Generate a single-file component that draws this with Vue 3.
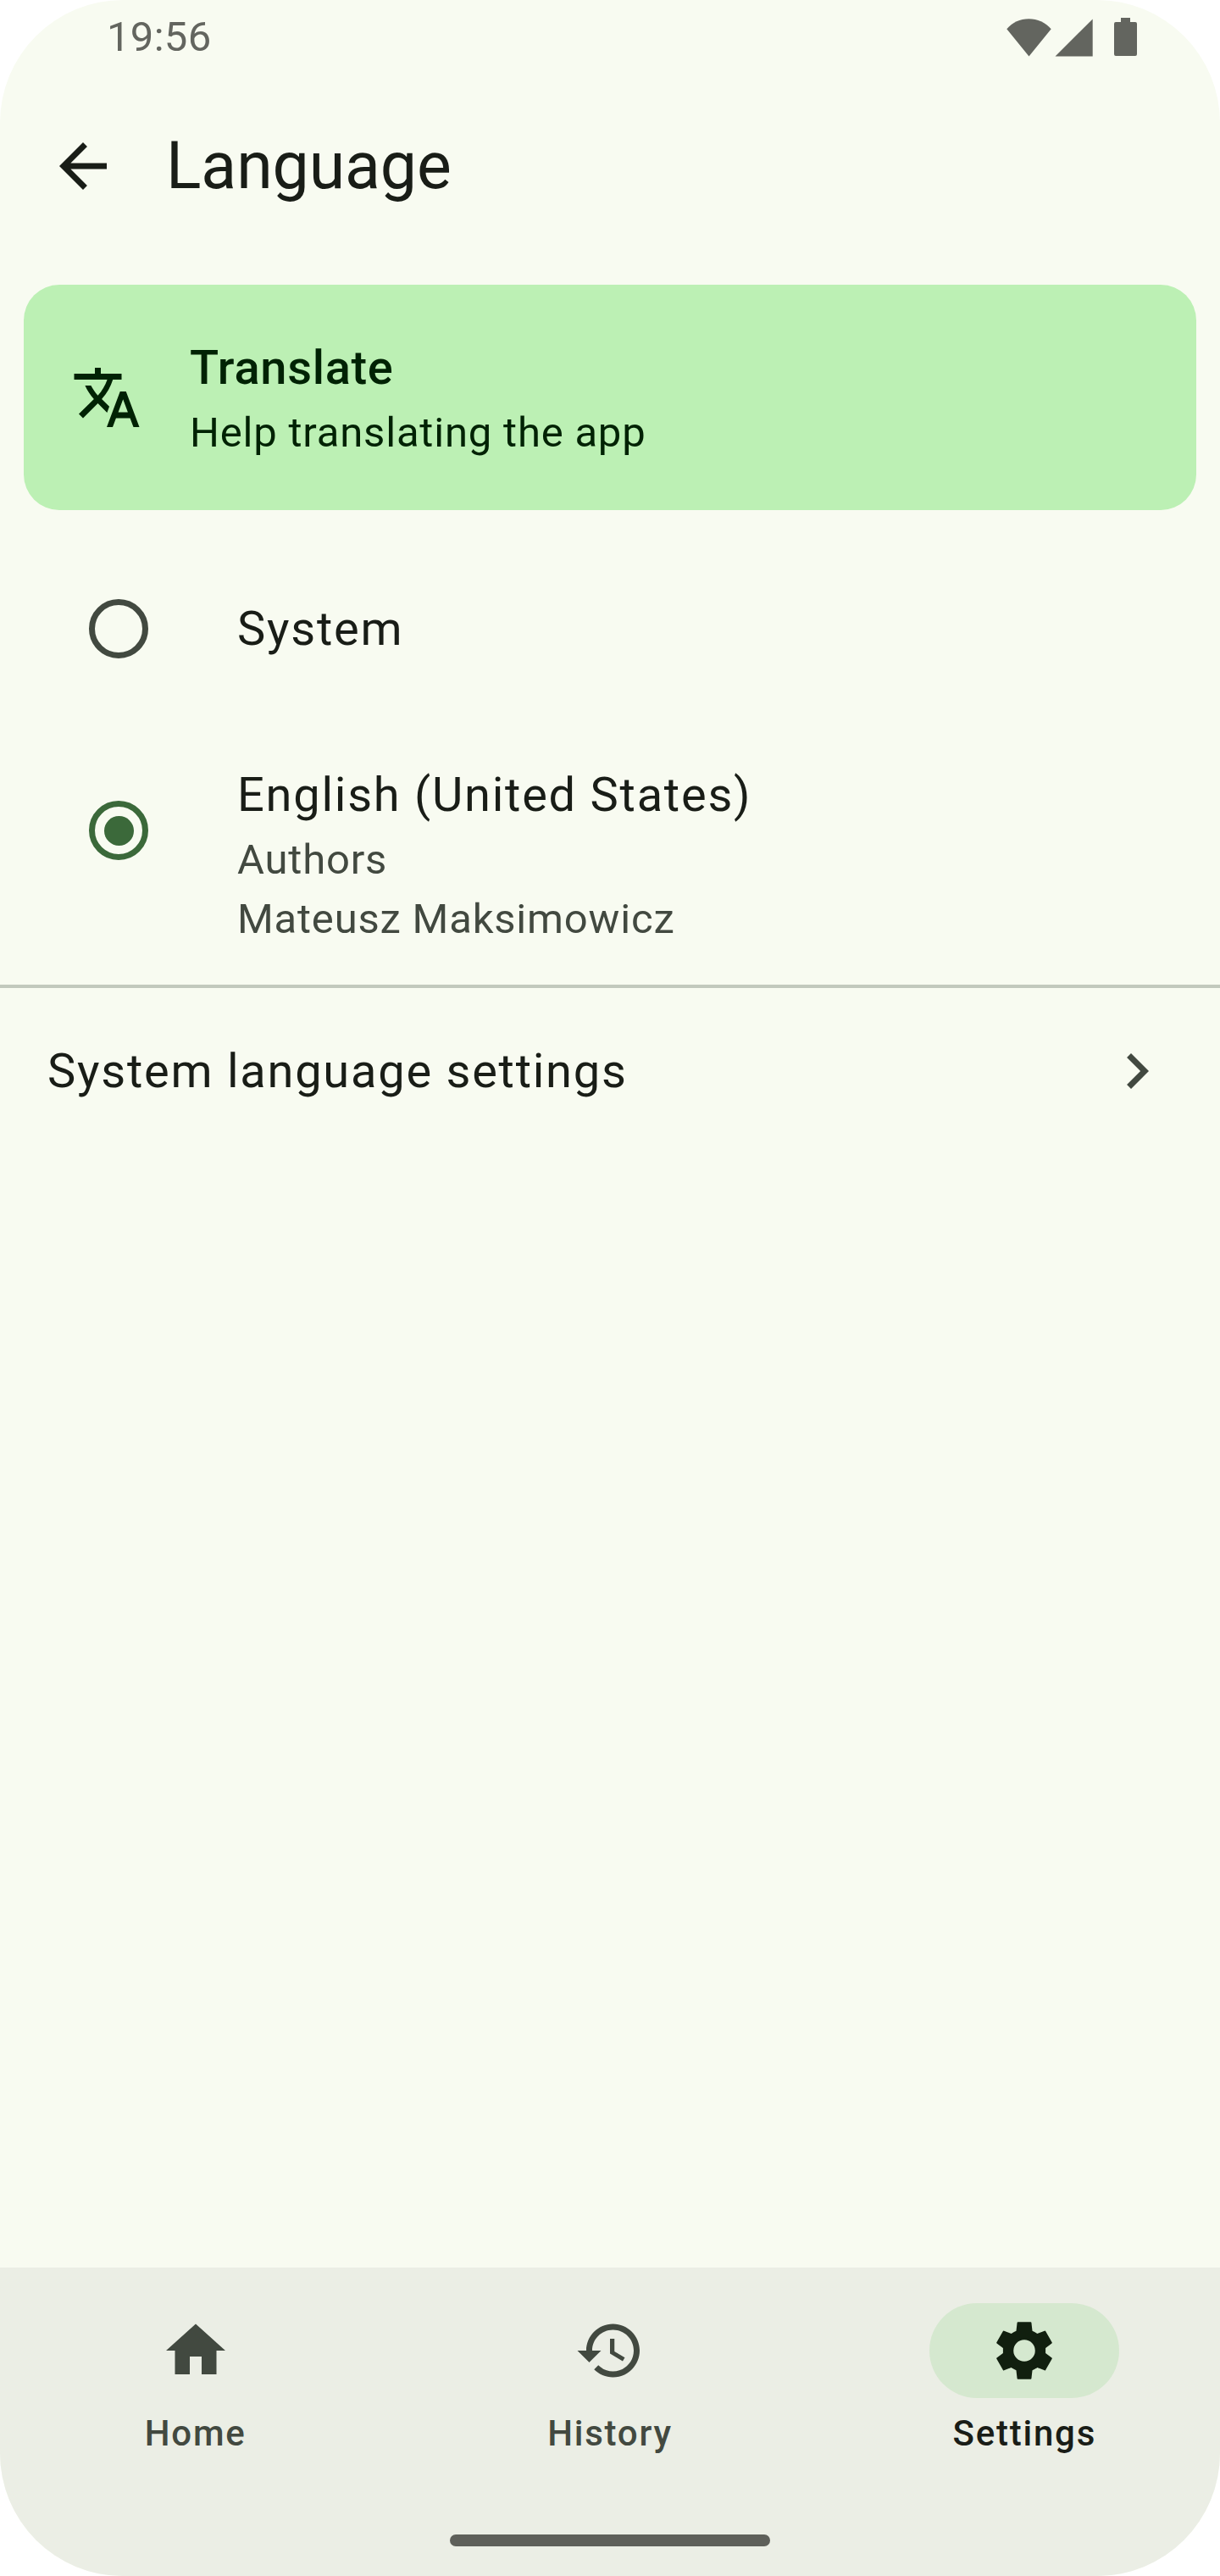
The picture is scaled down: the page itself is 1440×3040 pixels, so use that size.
<script setup>
import { ref } from 'vue'

const languages = [
  { id: 'system', name: 'System', authors: [] },
  { id: 'en-US', name: 'English (United States)', authors: ['Mateusz Maksimowicz'] },
]
const selected = ref('en-US')

const tabs = [
  { id: 'home', label: 'Home', icon: 'M10 20v-6h4v6h5v-8h3L12 3 2 12h3v8z' },
  {
    id: 'history',
    label: 'History',
    icon: 'M13 3c-4.97 0-9 4.03-9 9H1l3.89 3.89.07.14L9 12H6c0-3.87 3.13-7 7-7s7 3.13 7 7-3.13 7-7 7c-1.93 0-3.68-.79-4.94-2.06l-1.42 1.42C8.27 19.99 10.51 21 13 21c4.97 0 9-4.03 9-9s-4.03-9-9-9zm-1 5v5l4.28 2.54.72-1.21-3.5-2.08V8H12z',
  },
  {
    id: 'settings',
    label: 'Settings',
    icon: 'M9.85 2.35h4.3q.22 0 .25.22l.32 2.82q.9.35 1.65.93l2.45-.99q.22-.08.35.13l2.16 3.73q.12.2-.06.35l-2.1 1.58v1.76l2.1 1.58q.18.15.06.35l-2.16 3.73q-.13.21-.35.13l-2.45-.99q-.75.58-1.65.93l-.32 2.82q-.03.22-.25.22h-4.3q-.22 0-.25-.22l-.32-2.82q-.9-.35-1.65-.93l-2.45.99q-.22.08-.35-.13l-2.16-3.73q-.12-.2.06-.35l2.1-1.58v-1.76l-2.1-1.58q-.18-.15-.06-.35l2.16-3.73q.13-.21.35-.13l2.45.99q.75-.58 1.65-.93l.32-2.82q.03-.22.25-.22zM12 8.35a3.65 3.65 0 1 0 0 7.3a3.65 3.65 0 1 0 0-7.3z',
  },
]
const activeTab = ref('settings')
</script>

<template>
  <div class="screen">
    <header class="status">
      <span class="clock">19:56</span>
      <svg class="status-icons" width="156" height="48" viewBox="0 0 156 48" aria-hidden="true">
        <path d="M.3 15.3C7 7.300 16 3.300 26.300 3.300S45.700 7.300 52.700 15.300L26.500 47.500z" />
        <path d="M57.500 47.500L101.700 3.500V47.500z" />
        <path d="M135 2h11v5h6q2 0 2 2v36q0 2-2 2h-23q-2 0-2-2V9q0-2 2-2h6z" />
      </svg>
    </header>

    <div class="app-bar">
      <svg class="icon" viewBox="0 0 24 24" aria-hidden="true">
        <path d="M20 11H7.830l5.590-5.590L12 4l-8 8 8 8 1.410-1.410L7.830 13H20v-2z" />
      </svg>
      <h1>Language</h1>
    </div>

    <main>
      <section class="card">
        <svg class="icon" viewBox="0 0 24 24" aria-hidden="true">
          <path d="M12.870 15.070l-2.540-2.510.03-.03c1.740-1.940 2.980-4.170 3.710-6.530H17V4h-7V2H8v2H1v1.990h11.170C11.500 7.920 10.440 9.750 9 11.350 8.070 10.320 7.300 9.190 6.690 8h-2c.73 1.630 1.730 3.170 2.980 4.560l-5.090 5.020L4 19l5-5 3.110 3.110.76-2.040zM18.500 10h-2L12 22h2l1.120-3h4.750L21 22h2l-4.500-12zm-2.620 7l1.620-4.330L19.120 17h-3.240z" />
        </svg>
        <div>
          <div class="card-title">Translate</div>
          <div class="body">Help translating the app</div>
        </div>
      </section>

      <div
        v-for="lang in languages"
        :key="lang.id"
        class="row"
        :class="{ detailed: lang.authors.length }"
        @click="selected = lang.id"
      >
        <span class="radio" :class="{ checked: selected === lang.id }"></span>
        <div>
          <div class="headline">{{ lang.name }}</div>
          <template v-if="lang.authors.length">
            <div class="body muted">Authors</div>
            <div v-for="author in lang.authors" :key="author" class="body muted">{{ author }}</div>
          </template>
        </div>
      </div>

      <div class="divider"></div>

      <div class="link-row">
        <span class="headline">System language settings</span>
        <svg class="icon" viewBox="0 0 24 24" aria-hidden="true">
          <path d="M10 6L8.590 7.410 13.170 12l-4.580 4.590L10 18l6-6z" />
        </svg>
      </div>
    </main>

    <footer class="bottom">
      <nav>
        <button
          v-for="tab in tabs"
          :key="tab.id"
          class="tab"
          :class="{ active: activeTab === tab.id }"
          @click="activeTab = tab.id"
        >
          <span class="pill">
            <svg class="icon" viewBox="0 0 24 24" aria-hidden="true"><path :d="tab.icon" /></svg>
          </span>
          <span class="label">{{ tab.label }}</span>
        </button>
      </nav>
      <div class="handle"></div>
    </footer>
  </div>
</template>

<style>
body {
  background: #fff;
}
</style>

<style scoped>
.screen {
  width: 1440px;
  height: 3040px;
  display: flex;
  flex-direction: column;
  overflow: hidden;
  border-radius: 145px;
  background: #f8fbf1;
  color: #191d17;
  font-family: Roboto, 'Liberation Sans', sans-serif;
}
.icon {
  width: 84px;
  height: 84px;
  flex: none;
  fill: currentColor;
}
.status {
  height: 84px;
  box-sizing: border-box;
  padding: 3px 96px 0 126px;
  display: flex;
  justify-content: space-between;
  align-items: center;
  color: #63655f;
}
.clock {
  font-size: 49px;
  line-height: 58px;
  letter-spacing: 0.3px;
}
.status-icons {
  margin-bottom: 2px;
  fill: currentColor;
}
.app-bar {
  height: 224px;
  padding-left: 56px;
  display: flex;
  align-items: center;
  gap: 56px;
}
h1 {
  margin: 0;
  font-size: 77px;
  line-height: 98px;
  font-weight: 400;
  letter-spacing: -0.1px;
}
main {
  flex: 1;
}
.card {
  height: 266px;
  box-sizing: border-box;
  margin: 28px;
  padding: 0 56px;
  display: flex;
  align-items: center;
  gap: 56px;
  border-radius: 42px;
  background: #bcf0b4;
  color: #002204;
}
.card-title {
  font-size: 56px;
  line-height: 84px;
  font-weight: 500;
  letter-spacing: 0.7px;
}
.headline {
  font-size: 56px;
  line-height: 84px;
  letter-spacing: 1.75px;
}
.body {
  font-size: 49px;
  line-height: 70px;
  letter-spacing: 0.8px;
}
.muted {
  color: #424940;
}
.row {
  height: 224px;
  box-sizing: border-box;
  padding: 0 105px;
  display: flex;
  align-items: center;
  gap: 105px;
}
.row.detailed {
  height: 308px;
}
.detailed .radio {
  margin-bottom: 56px;
}
.radio {
  width: 70px;
  height: 70px;
  box-sizing: border-box;
  flex: none;
  display: grid;
  place-items: center;
  border: 7px solid #424940;
  border-radius: 50%;
}
.radio.checked {
  border-color: #3b693a;
}
.radio.checked::after {
  content: '';
  width: 35px;
  height: 35px;
  border-radius: 50%;
  background: #3b693a;
}
.divider {
  height: 3.5px;
  background: #c2c9bd;
}
.link-row {
  height: 196px;
  padding: 0 56px;
  display: flex;
  align-items: center;
  justify-content: space-between;
}
.link-row .icon {
  color: #424940;
}
.bottom {
  height: 364px;
  background: #ebeee5;
}
nav {
  height: 315px;
  display: flex;
  gap: 28px;
}
.tab {
  flex: 1;
  padding: 42px 0 0;
  display: flex;
  flex-direction: column;
  align-items: center;
  gap: 14px;
  border: 0;
  background: none;
  color: #424940;
  font-family: inherit;
}
.pill {
  width: 224px;
  height: 112px;
  display: grid;
  place-items: center;
  border-radius: 56px;
}
.label {
  font-size: 42px;
  line-height: 56px;
  font-weight: 500;
  letter-spacing: 1.75px;
}
.active .pill {
  background: #d5e8cf;
  color: #111f0f;
}
.active .label {
  color: #191d17;
}
.handle {
  width: 378px;
  height: 14px;
  margin: 0 auto;
  border-radius: 7px;
  background: #5e605a;
}
</style>
